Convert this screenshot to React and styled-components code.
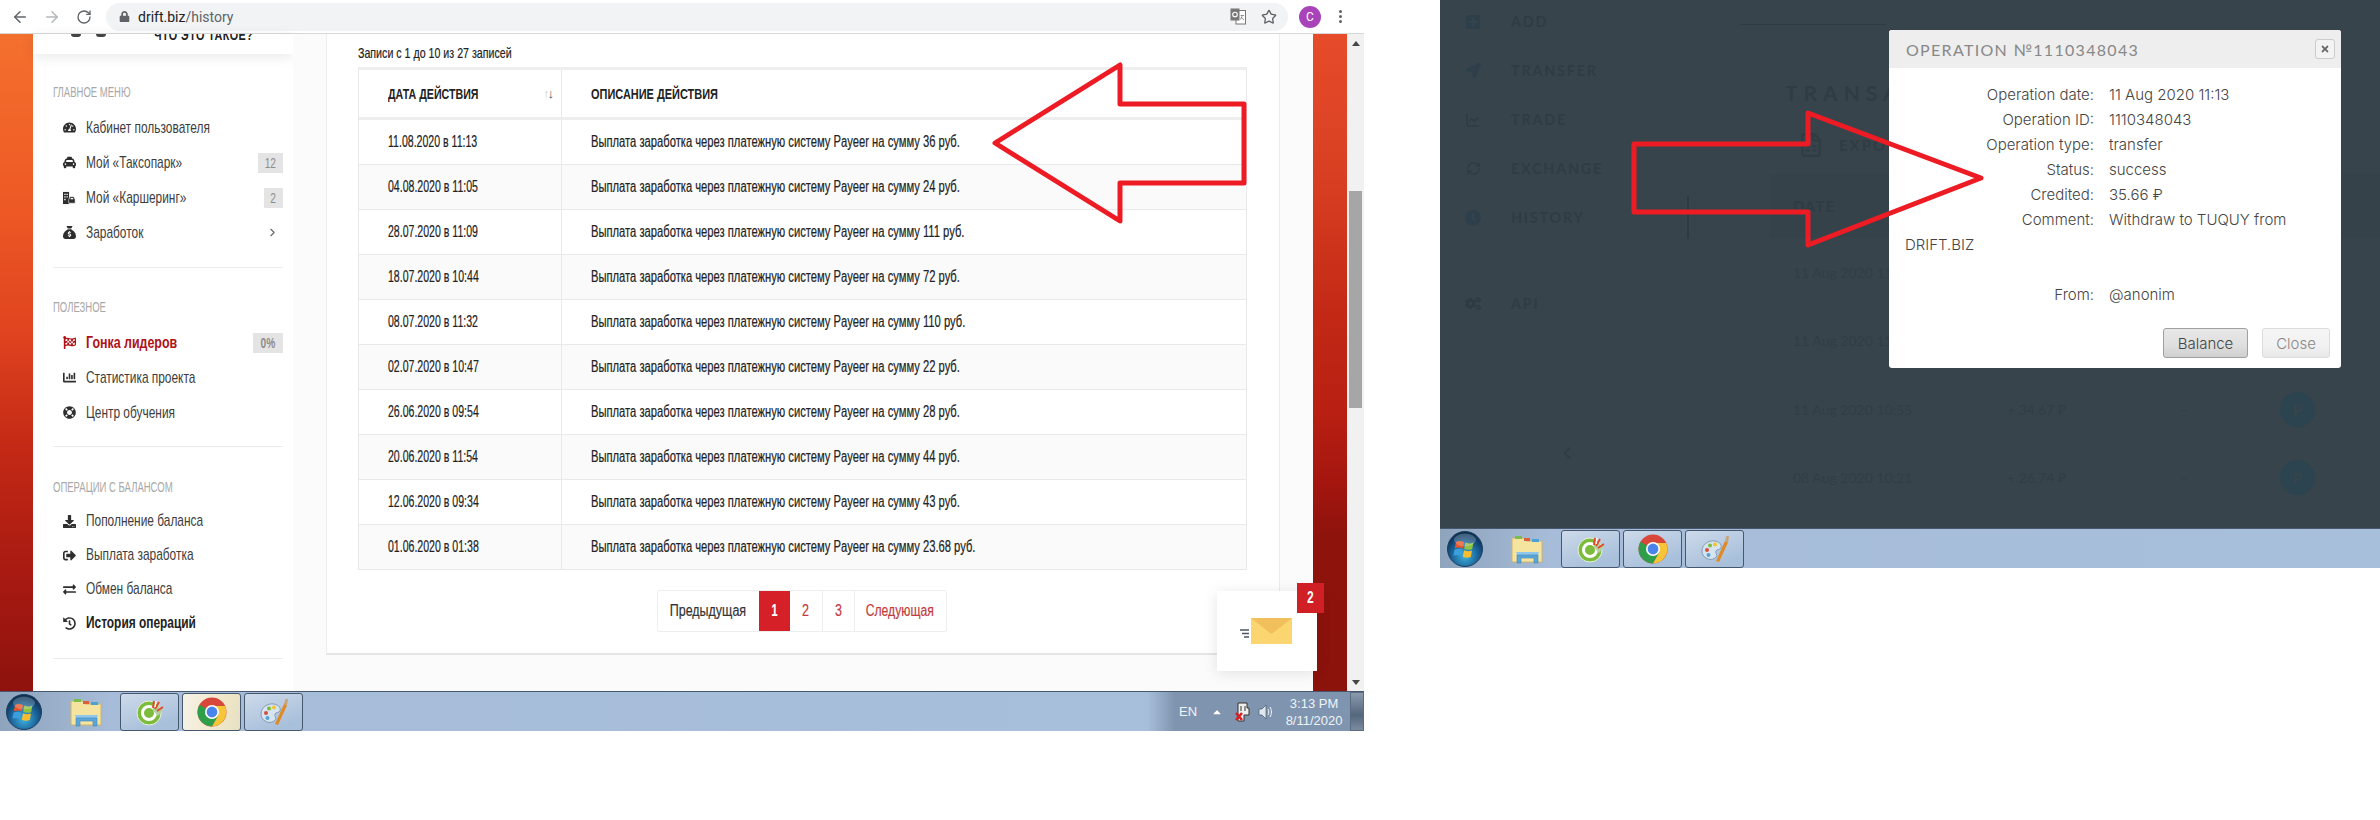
import React from 'react';
import styled, { createGlobalStyle } from 'styled-components';
import {
  FaTachometerAlt, FaTaxi, FaFlagCheckered, FaChartBar, FaLifeRing, FaDownload,
  FaSignOutAlt, FaExchangeAlt, FaHistory, FaTimes, FaLock, FaPlusSquare, FaLocationArrow,
  FaClock, FaCogs, FaCaretUp,
} from 'react-icons/fa';
import { FaSackDollar } from 'react-icons/fa6';
import { ArrowLeft, ArrowRight, RotateCw, Star, ChevronRight, ChevronLeft, LineChart, RefreshCw, FileSpreadsheet } from 'lucide-react';

const GlobalStyle = createGlobalStyle`
  html, body { margin: 0; padding: 0; background: #fff; }
  body { width: 2380px; height: 820px; overflow: hidden; font-family: "Liberation Sans", sans-serif; }
  * { box-sizing: border-box; }
`;

const Page = styled.div`
  display: flex;
  align-items: flex-start;
  gap: 76px;
  width: 2380px;
`;

// the site font is a condensed one and none is installed, so squeeze the text
const Squeeze = styled.span`
  display: inline-block;
  white-space: nowrap;
  transform: scaleX(${p => p.$x || 0.68});
  transform-origin: ${p => (p.$center ? 'center' : 'left')};
`;

/* ---------- left shot ---------- */
const LeftShot = styled.div`
  position: relative;
  width: 1364px;
  height: 731px;
  display: flex;
  flex-direction: column;
`;

const Toolbar = styled.div`
  height: 34px;
  flex-shrink: 0;
  display: flex;
  align-items: center;
  padding-left: 4px;
  background: #fff;
  border-bottom: 1px solid #d6d8da;
`;

const NavBtn = styled.div`
  width: 32px;
  display: flex;
  justify-content: center;
  color: ${p => (p.$off ? '#b4b7ba' : '#5f6368')};
`;

const Omnibox = styled.div`
  margin-left: 6px;
  width: 1182px;
  height: 28px;
  border-radius: 14px;
  background: #f1f3f4;
  display: flex;
  align-items: center;
  padding: 0 11px 0 13px;
  font: 14px Roboto, sans-serif;
  color: #5f6368;
`;

const Url = styled.span`
  margin-left: 8px;
  flex: 1;
  b { font-weight: 400; color: #202124; }
`;

const OmniIcons = styled.div`
  display: flex;
  align-items: center;
  gap: 15px;
  color: #5f6368;
`;

const Avatar = styled.div`
  margin-left: 11px;
  width: 22px;
  height: 22px;
  border-radius: 50%;
  background: #a843ba;
  color: #fff;
  font: 12px Roboto, sans-serif;
  display: flex;
  align-items: center;
  justify-content: center;
`;

const Dots = styled.div`
  margin-left: 18px;
  display: flex;
  flex-direction: column;
  gap: 2px;
  i { width: 3px; height: 3px; border-radius: 50%; background: #5f6368; }
`;

const Viewport = styled.div`
  height: 657px;
  display: grid;
  grid-template-columns: 33px 260px 1020px 34px 17px;
`;

const Strip = styled.div`
  background: ${p => (p.$right
    ? 'linear-gradient(#e64b2a 0%, #d83f22 22%, #c32915 42%, #b81f12 58%, #a5160f 68%, #8e130c 76%, #8c120c 100%)'
    : 'linear-gradient(#f4702e 0%, #ee5a25 25%, #e04420 45%, #c52a15 62%, #a81a12 82%, #8e120d 100%)')};
`;

const Sidebar = styled.aside`
  background: #fff;
`;

const UserCard = styled.div`
  height: 20px;
  overflow: hidden;
  display: flex;
  align-items: flex-start;
  padding-left: 38px;
  box-shadow: 0 3px 14px rgba(0, 0, 0, 0.09);
`;

const Wheel = styled.i`
  width: 10px;
  height: 3px;
  margin-right: 15px;
  border-radius: 0 0 4px 4px;
  background: #444;
`;

const UserLabel = styled.div`
  margin: -9px 0 0 33px;
  font-size: 15px;
  line-height: 20px;
  font-weight: 700;
  letter-spacing: 0.6px;
  color: #222;
`;

const MenuSection = styled.section`
  margin: 0 10px 0 20px;
  padding-top: ${p => p.$top}px;
  height: ${p => p.$height}px;
  border-bottom: 1px solid #ececec;
`;

const MenuTitle = styled.div`
  height: 16px;
  line-height: 16px;
  margin-bottom: ${p => p.$gap}px;
  font-size: 14px;
  color: #a8a8a8;
`;

const MenuItem = styled.div`
  height: ${p => p.$row}px;
  display: flex;
  align-items: center;
  padding-left: 10px;
  font-size: 17px;
  font-weight: ${p => (p.$bold ? 700 : 400)};
  color: ${p => (p.$red ? '#b11116' : p.$bold ? '#222' : '#3d3d3d')};
`;

const MenuIcon = styled.span`
  width: 13px;
  margin-right: 10px;
  display: flex;
  justify-content: center;
  font-size: 13px;
  color: ${p => (p.$red ? '#b11116' : '#2e2e2e')};
`;

const Count = styled.span`
  margin-left: auto;
  min-width: 19px;
  height: 20px;
  padding: 0 4px;
  background: #e4e4e4;
  color: #8d8d8d;
  font-size: 15px;
  line-height: 20px;
  text-align: center;
`;

const Chevron = styled.span`
  margin-left: auto;
  margin-right: 4px;
  color: #666;
  display: flex;
`;

const Content = styled.main`
  background: #fbfbfb;
  padding-left: 33px;
  padding-right: 33px;
`;

const Card = styled.div`
  height: 621px;
  background: #fff;
  padding: 12px 34px 0 31px;
  border-left: 1px solid #ececec;
  border-right: 1px solid #ececec;
  border-bottom: 2px solid #e6e6e6;
`;

const Info = styled.div`
  height: 14px;
  line-height: 14px;
  margin-bottom: 7px;
  font-size: 15px;
  color: #222;
  -webkit-text-stroke: 0.2px #222;
`;

const HistoryTable = styled.table`
  width: 889px;
  border-collapse: separate;
  border-spacing: 0;
  border-top: 3px solid #eee;
  border-left: 1px solid #e9e9e9;
  border-right: 1px solid #e9e9e9;
  table-layout: fixed;
  color: #222;
  th {
    position: relative;
    height: 50px;
    padding: 0 0 0 29px;
    text-align: left;
    font-size: 15px;
    color: #222;
    border-bottom: 3px solid #eee;
  }
  td {
    height: 45px;
    padding: 0 0 0 29px;
    font-size: 16px;
    -webkit-text-stroke: 0.2px #222;
    border-bottom: 1px solid #e9e9e9;
  }
  th:first-child, td:first-child { width: 203px; border-right: 1px solid #e9e9e9; }
  tbody tr:nth-child(even) td { background: #fafafa; }
`;

const SortMark = styled.span`
  position: absolute;
  right: 7px;
  top: 16px;
  font-size: 13px;
  font-weight: 400;
  color: #ccc;
  b { color: #555; font-weight: 400; margin-left: -2px; }
`;

const Pagination = styled.nav`
  display: flex;
  width: fit-content;
  height: 42px;
  margin: 20px auto 0;
  border: 1px solid #eee;
  border-radius: 2px;
  font-size: 16px;
  -webkit-text-stroke: 0.2px;
`;

const PageLink = styled.span`
  width: ${p => p.$w}px;
  display: flex;
  align-items: center;
  justify-content: center;
  border-left: ${p => (p.$sep ? '1px solid #eee' : 'none')};
  background: ${p => (p.$current ? '#d62027' : 'transparent')};
  color: ${p => (p.$current ? '#fff' : p.$plain ? '#333' : '#c23b3b')};
  font-weight: ${p => (p.$current ? 700 : 400)};
`;

const Scrollbar = styled.div`
  background: #f1f1f1;
  display: flex;
  flex-direction: column;
  align-items: center;
  padding: 7px 0 6px;
`;

const ScrollUp = styled.i`
  border: 4px solid transparent;
  border-top: 0;
  border-bottom: 5px solid #444;
`;

const ScrollDown = styled.i`
  margin-top: auto;
  border: 4px solid transparent;
  border-bottom: 0;
  border-top: 5px solid #444;
`;

const ScrollThumb = styled.div`
  width: 13px;
  height: 217px;
  margin-top: 145px;
  background: #a6a6a6;
`;

const MailWidget = styled.div`
  position: absolute;
  left: 1217px;
  top: 591px;
  width: 100px;
  height: 80px;
  background: #fff;
  box-shadow: 0 2px 14px rgba(0, 0, 0, 0.1);
  display: flex;
  padding: 27px 0 0 23px;
`;

const MailBadge = styled.span`
  position: absolute;
  right: -7px;
  top: -8px;
  width: 27px;
  height: 30px;
  background: #d01f25;
  color: #fff;
  font: 700 16px/30px "Liberation Sans", sans-serif;
  text-align: center;
`;

/* ---------- taskbar ---------- */
const Taskbar = styled.footer`
  height: 40px;
  flex-shrink: 0;
  display: flex;
  align-items: center;
  background: linear-gradient(90deg, #8ea3bc 0, #a6bcd8 112px, #a8bfdb 100%);
  border-top: 1px solid #47586e;
  padding-left: ${p => p.$pad}px;
`;

const OrbBox = styled.div`
  width: 36px;
  height: 36px;
  margin-right: 28px;
`;

const FolderBox = styled.div`
  width: 32px;
  height: 32px;
  margin-right: 18px;
`;

const TaskBtn = styled.div`
  width: 59px;
  height: 38px;
  margin-right: 3px;
  display: flex;
  align-items: center;
  justify-content: center;
  border: 1px solid #46586e;
  border-radius: 3px;
  background: ${p => (p.$active
    ? 'linear-gradient(100deg, #f6f2e6, #efe6c8 70%, #e8e0c2)'
    : 'linear-gradient(160deg, #cddaea, #a9c0db 80%)')};
`;

const Tray = styled.div`
  margin-left: auto;
  width: 217px;
  height: 100%;
  display: flex;
  align-items: center;
  background: linear-gradient(90deg, rgba(125, 146, 172, 0) 0, #7f94ae 28px);
  color: #eef3f8;
  font: 13px "Liberation Sans", sans-serif;
  padding-left: 32px;
`;

const TrayArrow = styled.span`
  margin: 0 12px 0 14px;
  display: flex;
  color: #fff;
`;

const TrayIcon = styled.span`
  display: flex;
  margin-right: 8px;
`;

const Clock = styled.div`
  width: 62px;
  margin-left: 1px;
  font-size: 13px;
  line-height: 17px;
  text-align: center;
`;

const ShowDesktop = styled.div`
  width: 14px;
  height: 100%;
  margin-left: auto;
  border: 1px solid #5b6c82;
  background: linear-gradient(#8b9aad, #55677d 60%, #7b8ba0);
`;

/* ---------- right shot ---------- */
const RightShot = styled.div`
  position: relative;
  width: 940px;
  height: 568px;
  display: flex;
  flex-direction: column;
`;

const Backdrop = styled.div`
  height: 528px;
  background: #37444b;
  overflow: hidden;
  display: flex;
  color: #303c43;
  font-family: Lato, sans-serif;
`;

const DimNav = styled.div`
  width: 249px;
  flex-shrink: 0;
  margin-top: -3px;
`;

const DimItem = styled.div`
  position: relative;
  height: 49px;
  display: flex;
  align-items: center;
  padding-left: 25px;
  margin-top: ${p => p.$gap || 0}px;
  font-size: 14.5px;
  font-weight: 700;
  letter-spacing: 1.7px;
  &::after {
    content: ${p => (p.$active ? '""' : 'none')};
    position: absolute;
    right: 0;
    top: 3px;
    bottom: 3px;
    width: 2px;
    background: #2e3a41;
  }
`;

const DimIcon = styled.span`
  width: 16px;
  margin-right: 30px;
  display: flex;
  justify-content: center;
  color: ${p => (p.$blue ? '#2c3f4a' : '#2f3b42')};
`;

const DimChevron = styled.div`
  margin: 115px 0 0 117px;
  color: #2f3b42;
`;

const DimMain = styled.div`
  flex: 1;
  padding-left: 51px;
`;

const DimTab = styled.div`
  width: 146px;
  height: 1px;
  margin-top: 24px;
  background: #2f3b42;
`;

const DimTitle = styled.div`
  margin: 57px 0 0 45px;
  height: 22px;
  line-height: 22px;
  font-size: 21px;
  letter-spacing: 6px;
  font-weight: 700;
`;

const DimExport = styled.div`
  margin: 28px 0 0 58px;
  display: flex;
  align-items: center;
  gap: 15px;
  font-size: 15px;
  font-weight: 700;
  letter-spacing: 2px;
`;

const DimHead = styled.div`
  margin: 16px 0 0 30px;
  height: 64px;
  display: flex;
  align-items: center;
  padding-left: 23px;
  background: #354249;
  font-size: 15px;
  font-weight: 700;
  letter-spacing: 1px;
`;

const DimRow = styled.div`
  margin-left: 53px;
  height: 68.5px;
  display: grid;
  grid-template-columns: 214px 173px 100px 36px;
  align-items: center;
  font-size: 14px;
  color: #323e45;
`;

const PayMark = styled.span`
  width: 35px;
  height: 35px;
  border-radius: 50%;
  background: #2c4450;
  color: #37444b;
  font: 700 16px/35px Lato, sans-serif;
  text-align: center;
`;

const Modal = styled.div`
  position: absolute;
  left: 449px;
  top: 30px;
  width: 452px;
  height: 338px;
  background: #fff;
  border-radius: 3px;
  overflow: hidden;
  font: 300 15px Inter, sans-serif;
  color: #444;
`;

const ModalHead = styled.div`
  height: 38px;
  background: #eee;
  display: flex;
  align-items: center;
  justify-content: space-between;
  padding: 0 6px 0 17px;
  font: 400 16px Lato, sans-serif;
  letter-spacing: 1.3px;
  color: #888;
`;

const CloseX = styled.span`
  width: 20px;
  height: 20px;
  border: 1px solid #ccc;
  border-radius: 3px;
  background: #f3f3f3;
  color: #666;
  font-size: 10px;
  display: flex;
  align-items: center;
  justify-content: center;
`;

const ModalBody = styled.div`
  padding: 14px 16px 0;
  line-height: 25px;
`;

const DetailRow = styled.div`
  margin-bottom: ${p => (p.$gap ? 25 : 0)}px;
`;

const DetailLabel = styled.span`
  display: inline-block;
  width: 189px;
  margin-right: 15px;
  text-align: right;
`;

const ModalFoot = styled.div`
  display: flex;
  justify-content: flex-end;
  gap: 14px;
  margin-top: 21px;
  padding-right: 11px;
`;

const ModalBtn = styled.div`
  width: ${p => p.$w}px;
  height: 30px;
  border-radius: 3px;
  display: flex;
  align-items: center;
  justify-content: center;
  border: 1px solid ${p => (p.$primary ? '#a0a0a0' : '#dcdcdc')};
  background: ${p => (p.$primary
    ? 'linear-gradient(#e8e8e8, #dedede 60%, #cfcfcf)'
    : 'linear-gradient(#f6f6f6, #f1f1f1 60%, #e8e8e8)')};
  color: ${p => (p.$primary ? '#444' : '#888')};
`;

const ArrowLayer = styled.svg`
  position: absolute;
  left: 0;
  top: 0;
  pointer-events: none;
`;

/* ---------- drawings ---------- */
const RedArrow = ({ w, h, points }) => (
  <ArrowLayer width={w} height={h} viewBox={`0 0 ${w} ${h}`}>
    <polygon points={points} fill="none" stroke="#ed1c24" strokeWidth="5" strokeLinejoin="round" />
  </ArrowLayer>
);

const TranslateIcon = () => (
  <svg width="16" height="17" viewBox="0 0 16 17">
    <rect x="6" y="2.5" width="9.5" height="13.5" fill="#fff" stroke="#777" />
    <rect x="0.5" y="0.5" width="9" height="12" fill="#777" />
    <circle cx="5" cy="6.5" r="2.3" fill="none" stroke="#fff" strokeWidth="1.1" />
    <path d="M10.5 7.5h3.5M12 7.5c0 2-1 3.5-2 4M11 9c.6 1 1.5 2 3 2.6" fill="none" stroke="#777" strokeWidth=".8" />
  </svg>
);

const CarShareIcon = () => (
  <svg width="15" height="14" viewBox="0 0 15 14">
    <path d="M0 0h7v14H0z" fill="#2e2e2e" />
    <path d="M1.5 2h1.5v1.5H1.5zM4 2h1.5v1.5H4zM1.5 5h1.5v1.5H1.5zM4 5h1.5v1.5H4zM1.5 8h1.5v1.5H1.5z" fill="#fff" />
    <path d="M6.5 9l1.5-3.5h4.5L14 9v4H6.5z" fill="#2e2e2e" stroke="#fff" strokeWidth=".6" />
    <path d="M8.5 8.5l.6-1.6h2.4l.6 1.6z" fill="#fff" />
  </svg>
);

const WinOrb = () => (
  <svg width="36" height="36" viewBox="0 0 36 36">
    <defs>
      <radialGradient id="orbFill" cx="50%" cy="70%" r="65%">
        <stop offset="0" stopColor="#3fb4e0" />
        <stop offset=".6" stopColor="#1a5f95" />
        <stop offset="1" stopColor="#0d2f52" />
      </radialGradient>
    </defs>
    <circle cx="18" cy="18" r="17.5" fill="url(#orbFill)" stroke="#1c3f5f" />
    <path d="M9 11c3-1.6 5-1.2 8 0l-1.2 6.4c-3-1.2-5-1.4-8-.2z" fill="#e8552a" />
    <path d="M18.4 11.4c3 1.2 5 1.4 8 0L25.2 18c-3 1.3-5 1-8-.2z" fill="#8fc23f" />
    <path d="M7.6 18.6c3-1.2 5-1 8 .2L14.4 25c-3-1.2-5-1.4-8-.2z" fill="#3a9fdc" />
    <path d="M17 19.2c3 1.2 5 1.4 8 .2L23.8 26c-3 1.2-5 1-8-.2z" fill="#f7bd2e" />
    <ellipse cx="18" cy="9" rx="11" ry="6.5" fill="#fff" opacity=".22" />
  </svg>
);

const FolderIcon = () => (
  <svg width="32" height="32" viewBox="0 0 32 32">
    <path d="M1 5h12l2 3h15a1 1 0 0 1 1 1v20H2a1 1 0 0 1-1-1z" fill="#f5e3a0" stroke="#cdb46c" />
    <path d="M4 3h7v3H4z" fill="#7bbd53" />
    <path d="M13 5h6v3h-6z" fill="#d9603d" />
    <path d="M21 6h7v3h-7z" fill="#4aa2d8" />
    <path d="M5 19h23l-1 3H6z" fill="#8fc6ea" />
    <path d="M6 22h21v8h-4v-5H10v5H6z" fill="#5ba6d8" stroke="#3f86ba" strokeWidth=".6" />
  </svg>
);

const CleanerIcon = () => (
  <svg width="28" height="28" viewBox="0 0 28 28">
    <circle cx="13" cy="15" r="12" fill="#7dbb3c" stroke="#e9f2db" />
    <circle cx="13" cy="15" r="6.5" fill="none" stroke="#fff" strokeWidth="3" />
    <path d="M16 11l5-3 6 4-5 6z" fill="#b4cfa0" />
    <path d="M18 3l-1 7M23 4l-4 7M27 9l-6 4" stroke="#e24a2c" strokeWidth="2" />
    <path d="M20 3l-1 6" stroke="#fff" strokeWidth="1.4" />
  </svg>
);

const ChromeIcon = () => (
  <svg width="30" height="30" viewBox="0 0 30 30">
    <circle cx="15" cy="15" r="14.5" fill="#d8473a" />
    <path d="M15 15 2.45 7.75A14.5 14.5 0 0 0 15 29.5L21 19z" fill="#2f9e4a" />
    <path d="M15 9h13a14.5 14.5 0 0 1-13 20.5L21.5 18z" fill="#f6c538" />
    <circle cx="15" cy="15" r="7" fill="#fff" />
    <circle cx="15" cy="15" r="5.4" fill="#4a84ea" />
  </svg>
);

const PaintIcon = () => (
  <svg width="30" height="30" viewBox="0 0 30 30">
    <path d="M2 17C2 10 9 6 15 7c5 1 7 4 6 7-1 2-4 1-5 3s2 4 0 6c-2 3-7 3-10 1s-4-4-4-7z" fill="#d5e4ef" stroke="#7f9bb3" />
    <circle cx="7" cy="16" r="2" fill="#d7503f" />
    <circle cx="10" cy="11.5" r="2" fill="#7dbb3c" />
    <circle cx="15" cy="10.5" r="2" fill="#f2c530" />
    <circle cx="8.5" cy="21" r="2" fill="#5a9fd8" />
    <path d="M16 27 25 7l3 1.5L19 28z" fill="#e08a26" />
    <path d="M25 7l1.5-5L29 2l-1 6.5z" fill="#c9a477" />
  </svg>
);

const EnvelopeIcon = () => (
  <svg width="52" height="26" viewBox="0 0 52 26">
    <path d="M0 12h9M2 15.5h7M4 19h5" stroke="#4b5560" strokeWidth="1.4" />
    <rect x="11" y="0" width="41" height="26" fill="#fbd56f" />
    <path d="M11 0h41L33 15a2.5 2.5 0 0 1-3 0z" fill="#f1bf5b" />
  </svg>
);

const PlugIcon = () => (
  <svg width="15" height="20" viewBox="0 0 15 20">
    <path d="M3 1h9v5h2v7H9v6H3z" fill="#eee" stroke="#333" />
    <path d="M6 4v5M10 4v5" stroke="#333" />
    <path d="M1 11l6 7M7 11l-6 7" stroke="#d91f26" strokeWidth="2.6" />
  </svg>
);

const SpeakerIcon = () => (
  <svg width="16" height="18" viewBox="0 0 16 18">
    <path d="M1 6h3l4-4v14l-4-4H1z" fill="#dfe6ee" stroke="#4c5b6e" strokeWidth=".7" />
    <path d="M10 6c1 2 1 4 0 6M12 4c2 3 2 7 0 10" fill="none" stroke="#eef3f8" />
  </svg>
);

const TaskbarIcons = ({ activeChrome }) => (
  <>
    <OrbBox><WinOrb /></OrbBox>
    <FolderBox><FolderIcon /></FolderBox>
    <TaskBtn><CleanerIcon /></TaskBtn>
    <TaskBtn $active={activeChrome}><ChromeIcon /></TaskBtn>
    <TaskBtn><PaintIcon /></TaskBtn>
  </>
);

/* ---------- data ---------- */
const rows = [
  ['11.08.2020 в 11:13', '36'],
  ['04.08.2020 в 11:05', '24'],
  ['28.07.2020 в 11:09', '111'],
  ['18.07.2020 в 10:44', '72'],
  ['08.07.2020 в 11:32', '110'],
  ['02.07.2020 в 10:47', '22'],
  ['26.06.2020 в 09:54', '28'],
  ['20.06.2020 в 11:54', '44'],
  ['12.06.2020 в 09:34', '43'],
  ['01.06.2020 в 01:38', '23.68'],
];

const details = [
  ['Operation date:', '11 Aug 2020 11:13'],
  ['Operation ID:', '1110348043'],
  ['Operation type:', 'transfer'],
  ['Status:', 'success'],
  ['Credited:', '35.66 ₽'],
];

const App = () => (
  <Page>
    <GlobalStyle />

    <LeftShot>
      <Toolbar>
        <NavBtn><ArrowLeft size={18} /></NavBtn>
        <NavBtn $off><ArrowRight size={18} /></NavBtn>
        <NavBtn><RotateCw size={16} /></NavBtn>
        <Omnibox>
          <FaLock size={11} />
          <Url><b>drift.biz</b>/history</Url>
          <OmniIcons>
            <TranslateIcon />
            <Star size={16} />
          </OmniIcons>
        </Omnibox>
        <Avatar>C</Avatar>
        <Dots><i /><i /><i /></Dots>
      </Toolbar>

      <Viewport>
        <Strip />
        <Sidebar>
          <UserCard>
            <Wheel /><Wheel />
            <UserLabel><Squeeze $x={0.72}>ЧТО ЭТО ТАКОЕ?</Squeeze></UserLabel>
          </UserCard>
          <MenuSection $top={30} $height={214}>
            <MenuTitle $gap={10}><Squeeze>ГЛАВНОЕ МЕНЮ</Squeeze></MenuTitle>
            <MenuItem $row={35}><MenuIcon><FaTachometerAlt /></MenuIcon><Squeeze $x={0.7}>Кабинет пользователя</Squeeze></MenuItem>
            <MenuItem $row={35}><MenuIcon><FaTaxi /></MenuIcon><Squeeze $x={0.7}>Мой «Таксопарк»</Squeeze><Count><Squeeze $center>12</Squeeze></Count></MenuItem>
            <MenuItem $row={35}><MenuIcon><CarShareIcon /></MenuIcon><Squeeze $x={0.7}>Мой «Каршеринг»</Squeeze><Count><Squeeze $center>2</Squeeze></Count></MenuItem>
            <MenuItem $row={35}><MenuIcon><FaSackDollar /></MenuIcon><Squeeze $x={0.7}>Заработок</Squeeze><Chevron><ChevronRight size={13} /></Chevron></MenuItem>
          </MenuSection>
          <MenuSection $top={31} $height={179}>
            <MenuTitle $gap={10}><Squeeze>ПОЛЕЗНОЕ</Squeeze></MenuTitle>
            <MenuItem $row={35} $red $bold><MenuIcon $red><FaFlagCheckered /></MenuIcon><Squeeze $x={0.73}>Гонка лидеров</Squeeze><Count><Squeeze $center>0%</Squeeze></Count></MenuItem>
            <MenuItem $row={35}><MenuIcon><FaChartBar /></MenuIcon><Squeeze $x={0.7}>Статистика проекта</Squeeze></MenuItem>
            <MenuItem $row={35}><MenuIcon><FaLifeRing /></MenuIcon><Squeeze $x={0.7}>Центр обучения</Squeeze></MenuItem>
          </MenuSection>
          <MenuSection $top={32} $height={212}>
            <MenuTitle $gap={9}><Squeeze>ОПЕРАЦИИ С БАЛАНСОМ</Squeeze></MenuTitle>
            <MenuItem $row={34}><MenuIcon><FaDownload /></MenuIcon><Squeeze $x={0.7}>Пополнение баланса</Squeeze></MenuItem>
            <MenuItem $row={34}><MenuIcon><FaSignOutAlt /></MenuIcon><Squeeze $x={0.7}>Выплата заработка</Squeeze></MenuItem>
            <MenuItem $row={34}><MenuIcon><FaExchangeAlt /></MenuIcon><Squeeze $x={0.7}>Обмен баланса</Squeeze></MenuItem>
            <MenuItem $row={34} $bold><MenuIcon><FaHistory /></MenuIcon><Squeeze $x={0.7}>История операций</Squeeze></MenuItem>
          </MenuSection>
        </Sidebar>

        <Content>
          <Card>
            <Info><Squeeze $x={0.71}>Записи с 1 до 10 из 27 записей</Squeeze></Info>
            <HistoryTable>
              <thead>
                <tr>
                  <th><Squeeze $x={0.71}>ДАТА ДЕЙСТВИЯ</Squeeze><SortMark>↑<b>↓</b></SortMark></th>
                  <th><Squeeze $x={0.73}>ОПИСАНИЕ ДЕЙСТВИЯ</Squeeze></th>
                </tr>
              </thead>
              <tbody>
                {rows.map(([date, sum]) => (
                  <tr key={date}>
                    <td><Squeeze $x={0.66}>{date}</Squeeze></td>
                    <td><Squeeze $x={0.7}>Выплата заработка через платежную систему Payeer на сумму {sum} руб.</Squeeze></td>
                  </tr>
                ))}
              </tbody>
            </HistoryTable>
            <Pagination>
              <PageLink $w={101} $plain><Squeeze $center $x={0.78}>Предыдущая</Squeeze></PageLink>
              <PageLink $w={31} $current><Squeeze $center>1</Squeeze></PageLink>
              <PageLink $w={32}><Squeeze $center $x={0.78}>2</Squeeze></PageLink>
              <PageLink $w={32} $sep><Squeeze $center $x={0.78}>3</Squeeze></PageLink>
              <PageLink $w={92} $sep><Squeeze $center $x={0.76}>Следующая</Squeeze></PageLink>
            </Pagination>
          </Card>
        </Content>

        <Strip $right />
        <Scrollbar>
          <ScrollUp />
          <ScrollThumb />
          <ScrollDown />
        </Scrollbar>
      </Viewport>

      <Taskbar $pad={6}>
        <TaskbarIcons activeChrome />
        <Tray>
          EN
          <TrayArrow><FaCaretUp size={12} /></TrayArrow>
          <TrayIcon><PlugIcon /></TrayIcon>
          <TrayIcon><SpeakerIcon /></TrayIcon>
          <Clock>3:13 PM<br />8/11/2020</Clock>
          <ShowDesktop />
        </Tray>
      </Taskbar>

      <MailWidget>
        <EnvelopeIcon />
        <MailBadge><Squeeze $center $x={0.75}>2</Squeeze></MailBadge>
      </MailWidget>

      <RedArrow w={1364} h={731} points="995,143 1120,65 1120,104 1244,104 1244,183 1120,183 1120,221" />
    </LeftShot>

    <RightShot>
      <Backdrop>
        <DimNav>
          <DimItem><DimIcon $blue><FaPlusSquare size={16} /></DimIcon>ADD</DimItem>
          <DimItem><DimIcon $blue><FaLocationArrow size={15} /></DimIcon>TRANSFER</DimItem>
          <DimItem><DimIcon><LineChart size={16} /></DimIcon>TRADE</DimItem>
          <DimItem><DimIcon><RefreshCw size={15} /></DimIcon>EXCHANGE</DimItem>
          <DimItem $active><DimIcon $blue><FaClock size={16} /></DimIcon>HISTORY</DimItem>
          <DimItem $gap={37}><DimIcon><FaCogs size={19} /></DimIcon>API</DimItem>
          <DimChevron><ChevronLeft size={20} /></DimChevron>
        </DimNav>
        <DimMain>
          <DimTab />
          <DimTitle>TRANSACTIONS</DimTitle>
          <DimExport><FileSpreadsheet size={26} />EXPORT</DimExport>
          <DimHead>DATE</DimHead>
          <DimRow><span>11 Aug 2020 11:13</span><span>+ 35.66 ₽</span><span>–</span><PayMark>P</PayMark></DimRow>
          <DimRow><span>11 Aug 2020 11:05</span><span>+ 35.66 ₽</span><span>–</span><PayMark>P</PayMark></DimRow>
          <DimRow><span>11 Aug 2020 10:55</span><span>+ 34.67 ₽</span><span>–</span><PayMark>P</PayMark></DimRow>
          <DimRow><span>08 Aug 2020 10:21</span><span>+ 26.74 ₽</span><span>–</span><PayMark>P</PayMark></DimRow>
          <DimRow><span /><span /><span /><PayMark>P</PayMark></DimRow>
        </DimMain>
      </Backdrop>

      <Taskbar $pad={7}>
        <TaskbarIcons />
      </Taskbar>

      <Modal>
        <ModalHead>
          OPERATION №1110348043
          <CloseX><FaTimes /></CloseX>
        </ModalHead>
        <ModalBody>
          {details.map(([label, value]) => (
            <DetailRow key={label}>
              <DetailLabel>{label}</DetailLabel>{value}
            </DetailRow>
          ))}
          <DetailRow $gap>
            <DetailLabel>Comment:</DetailLabel>Withdraw to TUQUY from DRIFT.BIZ
          </DetailRow>
          <DetailRow>
            <DetailLabel>From:</DetailLabel>@anonim
          </DetailRow>
        </ModalBody>
        <ModalFoot>
          <ModalBtn $w={85} $primary>Balance</ModalBtn>
          <ModalBtn $w={68}>Close</ModalBtn>
        </ModalFoot>
      </Modal>

      <RedArrow w={940} h={568} points="194,144 368,144 368,113 541,178 368,245 368,212 194,212" />
    </RightShot>
  </Page>
);

export default App;
